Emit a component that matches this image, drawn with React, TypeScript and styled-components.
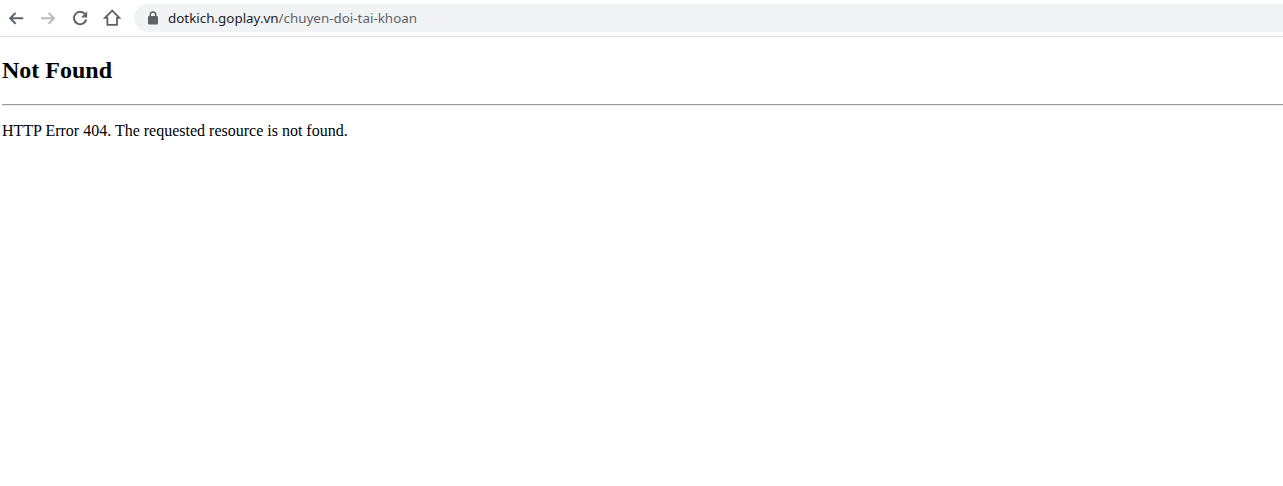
import React from "react";
import styled, { createGlobalStyle } from "styled-components";

const Global = createGlobalStyle`
  html, body { margin: 0; padding: 0; background: #fff; }
  body { font-family: "Liberation Serif", "Times New Roman", serif; color: #000; }
`;

const Toolbar = styled.header`
  display: flex;
  align-items: center;
  height: 36px;
  border-bottom: 1px solid #dadce0;
  background: #fff;
`;

const NavButton = styled.span<{ $disabled?: boolean }>`
  display: flex;
  align-items: center;
  justify-content: center;
  width: 32px;
  height: 32px;
  color: ${(p) => (p.$disabled ? "#b9babc" : "#5f6368")};
`;

const NavGroup = styled.nav`
  display: flex;
  align-items: center;
`;

const Omnibox = styled.div`
  flex: 1;
  display: flex;
  align-items: center;
  height: 28px;
  margin-left: 6px;
  padding-left: 13px;
  border-radius: 14px 0 0 14px;
  background: #f1f3f4;
  font-family: "Noto Sans", "Liberation Sans", sans-serif;
  font-size: 13.4px;
`;

const Lock = styled.svg`
  width: 12px;
  height: 14px;
  margin-right: 9px;
  color: #5f6368;
`;

const Host = styled.span`
  color: #202124;
`;

const Path = styled.span`
  color: #5f6368;
`;

const Content = styled.main`
  padding: 0 0 0 2px;
`;

const Title = styled.h2`
  margin: 20px 0 0;
  font-size: 24px;
  font-weight: bold;
  line-height: 27px;
`;

const Rule = styled.hr`
  box-sizing: border-box;
  margin: 20px 0 0;
  height: 2px;
  border: 0;
  border-top: 1px solid #9a9a9a;
  border-bottom: 1px solid #eee;
`;

const Message = styled.p`
  margin: 16px 0 0;
  font-size: 16px;
  line-height: 18px;
`;

const Icon = ({ d }: { d: string }) => (
  <svg width="18" height="18" viewBox="0 0 18 18" fill="none" stroke="currentColor" strokeWidth="2">
    <path d={d} />
  </svg>
);

export default function App() {
  return (
    <>
      <Global />
      <Toolbar>
        <NavGroup>
          <NavButton>
            <Icon d="M16.2 9.3H4M8.6 3.9 3.2 9.3l5.4 5.4" />
          </NavButton>
          <NavButton $disabled>
            <Icon d="M2 9.3h12.2M9.6 3.9l5.4 5.4-5.4 5.4" />
          </NavButton>
          <NavButton>
            <svg width="18" height="18" viewBox="0 0 18 18">
              <path d="M13.9 5A6.2 6.2 0 1 0 15.2 10.6" fill="none" stroke="currentColor" strokeWidth="2" />
              <path d="M16.2 2.2V8.4H10z" fill="currentColor" />
            </svg>
          </NavButton>
          <NavButton>
            <svg width="18" height="18" viewBox="0 0 18 18" fill="none" stroke="currentColor" strokeWidth="1.8">
              <path d="M9.2 1.6 2 8.8h2.4v7h9.6v-7h2.4z" />
            </svg>
          </NavButton>
        </NavGroup>
        <Omnibox>
          <Lock viewBox="0 0 12 14">
            <path
              fill="currentColor"
              d="M10 5H9.5V3.7a3.5 3.5 0 0 0-7 0V5H2a1 1 0 0 0-1 1v6.5a1 1 0 0 0 1 1h8a1 1 0 0 0 1-1V6a1 1 0 0 0-1-1zM4 5V3.7a2 2 0 0 1 4 0V5z"
            />
          </Lock>
          <Host>dotkich.goplay.vn</Host>
          <Path>/chuyen-doi-tai-khoan</Path>
        </Omnibox>
      </Toolbar>
      <Content>
        <Title>Not Found</Title>
        <Rule />
        <Message>HTTP Error 404. The requested resource is not found.</Message>
      </Content>
    </>
  );
}
